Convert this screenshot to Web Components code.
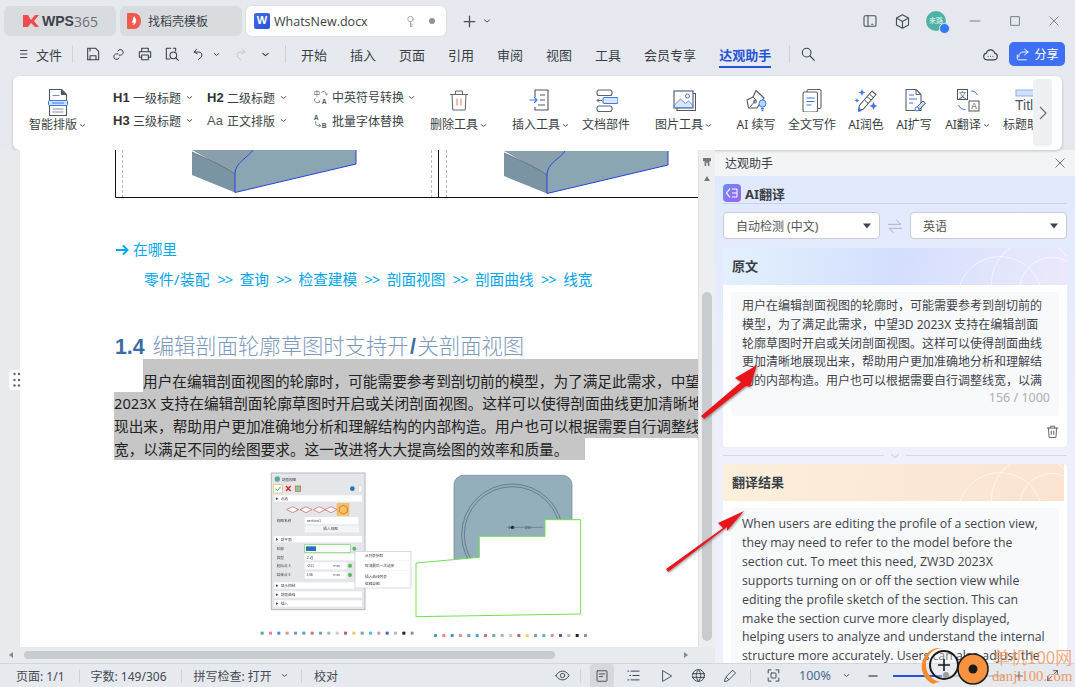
<!DOCTYPE html>
<html lang="zh">
<head>
<meta charset="utf-8">
<title>WhatsNew.docx</title>
<style>
  html, body { margin: 0; padding: 0; background: #e6e9ee; }
  body { font-family: "Noto Sans", "Noto Sans CJK SC", sans-serif; color: #333; }
</style>
</head>
<body>
<wps-app></wps-app>

<script>
const S = 'fill="none" stroke="currentColor" stroke-width="1.6" stroke-linecap="round" stroke-linejoin="round"';
const ICONS = {
  menu: `<path ${S} d="M6 6h11M6 12h11M6 18h11"/>`,
  save: `<path ${S} d="M4 3.500h12l4.500 4.500v12.500h-16.500zM7.500 20.500v-6h9v6M7.500 3.500v4"/>`,
  link: `<path ${S} d="M11 6.500a4.500 4.500 0 0 1 8.500 2c0 2.500-2 4.500-4.500 4.500h-2M13 17.500a4.500 4.500 0 0 1-8.500-2c0-2.500 2-4.500 4.500-4.500h2"/>`,
  print: `<path ${S} d="M7 8V3.500h10V8M7 17H3.500V8.500h17V17H17M7 13.500h10v7H7z"/>`,
  preview: `<path ${S} d="M10 3.500H3.500v16H9M14 3.500h3.500v4"/><circle ${S} cx="14" cy="14" r="5"/><path ${S} d="M18 18l3.500 3.500"/>`,
  undo: `<path ${S} d="M9 3.500L5 8l5 3M5 8h7.500a5 5 0 0 1 3 9l-3.500 3"/>`,
  redo: `<path fill="none" stroke="#c4c7cc" stroke-width="1.600" stroke-linecap="round" stroke-linejoin="round" d="M15 3.500L19 8l-5 3M19 8h-7.500a5 5 0 0 0-3 9l3.500 3"/>`,
  chev: `<path fill="none" stroke="currentColor" stroke-width="2.400" stroke-linecap="round" stroke-linejoin="round" d="M6 9.500l6 5 6-5"/>`,
  search: `<circle ${S} cx="10" cy="10" r="6.500"/><path ${S} d="M15 15l6.500 6.500"/>`,
  plus: `<path fill="none" stroke="currentColor" stroke-width="2" stroke-linecap="round" d="M12 3.500v17M3.500 12h17"/>`,
  phone: `<rect ${S} x="3" y="4" width="18" height="16" rx="2"/><path ${S} d="M9 4v16M14.500 17h2"/>`,
  box: `<path ${S} d="M12 2.500l8.500 4.700v9.600L12 21.500l-8.500-4.700V7.200zM3.500 7.200L12 12l8.500-4.800M12 12v9.500"/>`,
  min: `<path fill="none" stroke="currentColor" stroke-width="1.200" d="M3 12h18"/>`,
  max: `<rect fill="none" stroke="currentColor" stroke-width="1.400" x="3.500" y="3.500" width="17" height="17"/>`,
  close: `<path fill="none" stroke="currentColor" stroke-width="1.300" d="M3 3l18 18M21 3L3 21"/>`,
  cloud: `<path ${S} d="M7 19.500a4.800 4.800 0 0 1-.8-9.500 6 6 0 0 1 11.600 0 4.800 4.800 0 0 1-.8 9.500z"/><path fill="none" stroke="currentColor" stroke-width="1.700" stroke-linecap="round" d="M8.500 14.500h.01M12 14.500h.01M15.500 14.500h.01"/>`,
  share: `<path fill="none" stroke="#fff" stroke-width="1.500" stroke-linecap="round" stroke-linejoin="round" d="M15.500 3.500L21 8l-5.500 4.500M21 8h-8a7 7 0 0 0-7 7v1M3.500 13v5a2.500 2.500 0 0 0 2.500 2.500h12"/>`,
  key: `<circle ${S} cx="12" cy="7.500" r="5"/><path ${S} d="M12 12.500v9M12 17h3.500M12 20.500h3"/>`,
  trash: `<path ${S} d="M3.500 6.500h17M8.500 6.500V3.500h7v3M5.500 6.500l1 15h11l1-15"/><path fill="none" stroke="currentColor" stroke-width="1.600" d="M10 10.500v7M14 10.500v7"/>`,
  'trash-red': `<path fill="none" stroke="#60666e" stroke-width="1" stroke-linejoin="round" d="M3 6.500h18M8.500 6.500V3h7v3.500M5 6.500l.8 15.500h12.400l.8-15.500"/><path fill="none" stroke="#eba79b" stroke-width="1.500" d="M10 10.500v7M14 10.500v7"/>`,
  smart: `<path fill="none" stroke="#4e5661" stroke-width="1.100" stroke-linejoin="round" d="M3.500 1.500h12l5 5v21h-17z"/><path fill="#4e5661" d="M15 1.500l5.500 5.500h-5.500z"/><path stroke="#8a9098" stroke-width="1.200" d="M6.500 7.500h7M6.500 21h11M6.500 24h11"/><rect x="2.500" y="12.500" width="19" height="5" rx="1" fill="#cfe0fb" stroke="#3d78e8" stroke-width="1"/><path stroke="#3d78e8" d="M6 15h12"/>`,
  insert: `<path fill="none" stroke="#4e5661" stroke-width="1.100" stroke-linejoin="round" d="M6 9V2h13v20H6v-3"/><path stroke="#4e5661" d="M11 7h5M11 12h5M9 17h7"/><path fill="none" stroke="#3d78e8" stroke-width="1.100" stroke-linecap="round" stroke-linejoin="round" d="M1 12h7M5.500 9.500L8 12l-2.500 2.500"/>`,
  parts: `<rect x="3" y="2" width="15" height="5.500" rx="2" fill="none" stroke="#5a616b" stroke-width="1.100"/><rect x="3" y="18" width="15" height="5.500" rx="2" fill="none" stroke="#5a616b" stroke-width="1.100"/><rect x="9" y="9.500" width="15" height="6" rx="1.500" fill="#d8e5fc" stroke="#3d78e8" stroke-width="1.100"/><path fill="none" stroke="#5a616b" d="M3 12.500h5M5 10.500l-2 2 2 2"/>`,
  image: `<rect x="2" y="3" width="19" height="17" fill="#fff" stroke="#4e5661" stroke-width="1.100"/><path fill="none" stroke="#4e5661" stroke-width="1.100" d="M21 5.500h2.500v17H5V20"/><path fill="#dce6f6" stroke="#5e8fe8" stroke-width="1" stroke-linejoin="round" d="M2.500 17l6-6 5 4.500 3-2.500 4 4v2.500h-18z"/><circle cx="15.500" cy="8" r="2" fill="#fff" stroke="#3d78e8"/>`,
  aiwrite: `<path fill="none" stroke="#4e5661" stroke-width="1.100" stroke-linejoin="round" d="M12 2.500L20 10l-2 2.500-5 7.500H4.500L3 12l6-3z"/><path fill="none" stroke="#4e5661" d="M9 9l3 3-6 7"/><circle cx="11" cy="13.500" r="1.500" fill="none" stroke="#4e5661"/><circle cx="18.500" cy="15.500" r="3.500" fill="#bcd5fa" stroke="#3d78e8"/><path stroke="#3d78e8" stroke-width="1.300" d="M17 20.500h3M17.500 22.500h2"/>`,
  fulltext: `<rect x="7" y="1.500" width="14" height="19" rx="1.500" fill="#fff" stroke="#5a616b" stroke-width="1.100"/><rect x="3" y="4" width="14.500" height="20" rx="1.500" fill="#fff" stroke="#5a616b" stroke-width="1.100"/><path stroke="#3d78e8" stroke-width="1.200" d="M6.500 10h8M6.500 13.500h8M6.500 17h5"/>`,
  polish: `<path fill="#fff" stroke="#4e5661" stroke-width="1.100" stroke-linejoin="round" d="M18 3l4 3.500L9.500 21l-5 2 .8-5.500z"/><path stroke="#4e5661" d="M15.500 6l3.800 3.500M13 8.500l4 3.500M10.500 12l3.500 3"/><path fill="#3d78e8" d="M8 1l1 2.500L11.500 4.500 9 5.500 8 8 7 5.500 4.500 4.500 7 3.500zM3 10l.7 1.800 1.800.7-1.800.7L3 15l-.7-1.800-1.800-.7 1.800-.7zM19.500 14l1.200 2.800 2.800 1.200-2.800 1.200-1.200 2.800-1.200-2.800-2.800-1.200 2.800-1.200zM5 19l3 4-4 1z"/>`,
  expand: `<path fill="#fff" stroke="#5a616b" stroke-width="1.100" stroke-linejoin="round" d="M4 1.500h10l5 5v16H4z"/><path fill="none" stroke="#5a616b" d="M14 1.500v5h5"/><path stroke="#3d78e8" stroke-width="1.200" d="M7 7h5M7 11h8M7 15h4"/><path fill="#cfe0fb" stroke="#4e5661" d="M21 13l2.500 2-5.500 6-3.500 1 .8-3.500z"/><circle cx="15" cy="21" r="2" fill="#fff" stroke="#3d78e8"/>`,
  translate: `<rect x="1.500" y="1.500" width="10" height="10" fill="#fff" stroke="#4e5661"/><text x="6.500" y="9.500" text-anchor="middle" font-size="8" fill="#4e5661" font-family="Noto Sans CJK SC">文</text><rect x="13" y="13" width="10" height="10" fill="#fff" stroke="#4e5661"/><text x="18" y="21" text-anchor="middle" font-size="8.500" fill="#4e5661" font-family="Liberation Sans">A</text><path fill="none" stroke="#3d78e8" d="M15 3a7 7 0 0 1 6.500 4M9.500 21.500A7 7 0 0 1 2.500 17"/>`,
  title: `<rect x="1" y="2" width="23" height="6" fill="#cfe0fb" stroke="#8db1f0" stroke-width="1"/><text x="0" y="22" font-size="14" fill="#4e5661" font-family="Liberation Sans">Titl</text>`,
  'conv-a': `<text x="1" y="10" font-size="9.500" fill="#4e5661" font-family="Noto Sans CJK SC">中</text><text x="13" y="22" font-size="10" font-weight="700" fill="#4e5661" font-family="Liberation Sans">A</text><path fill="none" stroke="#4e5661" stroke-linecap="round" d="M13 5a4 4 0 0 1 7 3M19 8l1.500 1 1-1.500M3 14a4 4 0 0 0 7 5M9.500 20l1-1.500-1.500-.5"/>`,
  'conv-b': `<text x="1" y="10" font-size="10" font-weight="700" fill="#4e5661" font-family="Liberation Sans">A</text><text x="13" y="22" font-size="10" font-weight="700" fill="#4e5661" font-family="Liberation Sans">B</text><path fill="none" stroke="#4e5661" stroke-linecap="round" d="M4 13v3a3 3 0 0 0 3 3h4M9 16.500l2.500 2.500L9 21"/>`,
  eye: `<path ${S} d="M1.500 12C4.500 7 8 5 12 5s7.500 2 10.500 7c-3 5-6.500 7-10.500 7s-7.500-2-10.500-7z"/><circle ${S} cx="12" cy="12" r="3.500"/>`,
  page: `<rect ${S} x="3.500" y="3" width="17" height="18" rx="1"/><path ${S} d="M7.500 8.500h9M7.500 13h5.500"/>`,
  outline: `<path ${S} d="M3 5h1.500M8 5h13M6 12h1.500M11 12h10M3 19h1.500M8 19h13"/>`,
  play: `<path ${S} d="M5 3l15 9-15 9z"/>`,
  globe: `<circle ${S} cx="12" cy="12" r="9.500"/><path ${S} d="M2.500 9h19M2.500 15h19M12 2.500c-5 6-5 13 0 19M12 2.500c5 6 5 13 0 19"/>`,
  pen: `<path ${S} d="M17 2.500l4.500 4.500L10 18.500 5.500 14zM5.500 14c-2 1-2.500 4-3 7.500 3.500-.5 6.500-1 7.500-3"/>`,
  fit: `<path ${S} d="M8 3H3.500v5M16 3h4.500v5M8 21H3.500v-5M16 21h4.500v-5"/><rect ${S} x="8" y="8" width="8" height="8" rx="1"/>`,
  full: `<path ${S} d="M14 3h7v7M21 3l-7 7M10 21H3v-7M3 21l7-7"/>`,
  swap: `<path fill="none" stroke="#aeb4bb" stroke-width="1.500" stroke-linecap="round" stroke-linejoin="round" d="M2 9.500h19l-6.500-6M22 15.500H3l6.500 6"/>`,
  triangle: `<path fill="currentColor" d="M4 7h16l-8 10z"/>`,
  minus: `<path fill="none" stroke="currentColor" stroke-width="2.600" d="M3 12h18"/>`,
};

class WpsIcon extends HTMLElement {
  connectedCallback() {
    const size = this.getAttribute('size') || 16;
    const name = this.getAttribute('name');
    const vb = name === 'smart' ? '0 0 24 29' : '0 0 24 24';
    const h = name === 'smart' ? Math.round(size * 29 / 24) : size;
    this.attachShadow({ mode: 'open' }).innerHTML = `
      <style>:host { display: inline-flex; line-height: 0; flex: none; } svg { display: block; }</style>
      <svg width="${size}" height="${h}" viewBox="${vb}">${ICONS[name] || ''}</svg>`;
  }
}
customElements.define('wps-icon', WpsIcon);

class WpsTab extends HTMLElement {
  connectedCallback() {
    this.attachShadow({ mode: 'open' }).innerHTML = `
      <style>
        :host { display: flex; align-items: center; height: 30px; border-radius: 6px; background: #d9dcdf;
                box-sizing: border-box; padding-left: 7px; font-size: 12px; color: #3a3f46; overflow: hidden; }
        :host([active]) { background: #fff; font-size: 12.500px; box-shadow: 0 0 2px rgba(0,0,0,.12); }
      </style>
      <slot></slot>`;
  }
}
customElements.define('wps-tab', WpsTab);

class WpsTabbar extends HTMLElement {
  connectedCallback() {
    this.attachShadow({ mode: 'open' }).innerHTML = `
      <style>
        :host { display: flex; align-items: flex-start; height: 38px; box-sizing: border-box; padding: 6px 2px 0 4px; gap: 4px; color: #4a4f56; }
        .logo { width: 16px; height: 12px; margin: 0 3px 0 12px; }
        .wps { font: 700 14px "Liberation Sans", sans-serif; color: #3d434b; }
        .n365 { font: 400 14px "Open Sans", sans-serif; color: #6a6f76; }
        .w { width: 16px; height: 16px; border-radius: 2px; background: linear-gradient(135deg, #3d6bf0, #2c54d8); color: #fff;
             font: 700 11px/15px "Liberation Sans", sans-serif; text-align: center; margin: 0 4px 0 1px; }
        .w-t { width: 130px; font-family: "Open Sans", sans-serif; white-space: nowrap; }
        .dot { width: 6px; height: 6px; border-radius: 50%; background: #8e9298; margin-left: 12px; }
        .add { display: flex; align-items: center; gap: 5px; height: 30px; margin-left: 12px; }
        .right { margin-left: auto; display: flex; align-items: center; height: 30px; }
        .slot { display: flex; justify-content: center; align-items: center; width: 32px; height: 30px; }
        .avatar { position: relative; width: 20px; height: 20px; border-radius: 50%; background: #4db3a4; color: #e8f6f3;
                  font-size: 7px; line-height: 20px; text-align: center; }
        .avatar i { position: absolute; right: -4px; bottom: -3px; width: 9px; height: 9px; border-radius: 50%; background: #2f7bf0; border: 1px solid #e6e9ee; }
        .win { width: 40px; display: flex; justify-content: center; }
      </style>
      <wps-tab style="width:112px">
        <svg class="logo" viewBox="0 0 16 12"><path fill="#ee4a4f" d="M0 0h5l3 5 4-5h4l-5 6 5 6h-4L8 8l-3 4H0z"/></svg>
        <span class="wps">WPS</span><span class="n365">365</span>
      </wps-tab>
      <wps-tab style="width:122px">
        <svg width="14" height="16" viewBox="0 0 14 16" style="margin:0 7px 0 0"><path fill="#ee5a4d" d="M0 1a1 1 0 0 1 1-1h6a7 8 0 0 1 0 16H1a1 1 0 0 1-1-1z"/><path fill="#fff" d="M7 3c1 2 3 3 2 6-.5 2-2 3-4 3 2-1 2-2 1-3-.5 1-1 1-1.500 1C6 8 6 5 7 3z"/></svg>
        <span>找稻壳模板</span>
      </wps-tab>
      <wps-tab active style="width:200px">
        <span class="w">W</span><span class="w-t">WhatsNew.docx</span>
        <wps-icon name="key" size="13" style="color:#9aa0a6"></wps-icon><span class="dot"></span>
      </wps-tab>
      <div class="add"><wps-icon name="plus" size="15"></wps-icon><wps-icon name="chev" size="10"></wps-icon></div>
      <div class="right">
        <div class="slot"><wps-icon name="phone" size="16"></wps-icon></div>
        <div class="slot"><wps-icon name="box" size="17"></wps-icon></div>
        <div class="slot" style="margin-left:2px"><div class="avatar">来路<i></i></div></div>
        <div class="win" style="margin-left:3px"><wps-icon name="min" size="14"></wps-icon></div>
        <div class="win"><wps-icon name="max" size="12"></wps-icon></div>
        <div class="win" style="width:38px"><wps-icon name="close" size="12"></wps-icon></div>
      </div>`;
  }
}
customElements.define('wps-tabbar', WpsTabbar);

class WpsMenubar extends HTMLElement {
  connectedCallback() {
    const slot = (w, html) => `<span class="s" style="width:${w}px">${html}</span>`;
    const ic = (n, size = 16) => `<wps-icon name="${n}" size="${size}"></wps-icon>`;
    const tabs = ['开始', '插入', '页面', '引用', '审阅', '视图', '工具', '会员专享'];
    this.attachShadow({ mode: 'open' }).innerHTML = `
      <style>
        :host { display: flex; align-items: center; height: 38px; box-sizing: border-box; padding: 0 10px 6px 14px; font-size: 13px; color: #3a3f46; }
        .s { display: flex; justify-content: center; align-items: center; flex: none; }
        .d { width: 1px; height: 18px; background: #cfd2d6; }
        .tabs { display: flex; gap: 23px; margin-left: 2px; }
        .on { position: relative; color: #2553d8; font-weight: 700; }
        .on::after { content: ""; position: absolute; left: 0; right: 0; bottom: -4px; height: 2px; background: #2553d8; }
        .share { margin-left: 10px; width: 56px; height: 24px; border-radius: 5px; background: #3f6ff5; color: #fff; font-size: 12px;
                 display: flex; align-items: center; justify-content: center; gap: 4px; }
        .cloud { margin-left: auto; }
      </style>
      ${slot(20, ic('menu', 14))}${slot(30, '<span>文件</span>')}${slot(16, '<i class="d"></i>')}
      ${slot(25, ic('save'))}${slot(27, ic('link', 15))}${slot(26, ic('print'))}${slot(27, ic('preview'))}${slot(26, ic('undo', 15))}
      ${slot(10, ic('chev', 9))}${slot(38, ic('redo', 15))}${slot(12, ic('chev', 11))}${slot(28, '<i class="d"></i>')}
      <div class="tabs">${tabs.map(t => `<span>${t}</span>`).join('')}<span class="on">达观助手</span></div>
      ${slot(37, '<i class="d"></i>')}${slot(0, ic('search', 16))}
      <span class="s cloud">${ic('cloud', 17)}</span>
      <div class="share">${ic('share', 15)}<span>分享</span></div>`;
  }
}
customElements.define('wps-menubar', WpsMenubar);

class RibbonTool extends HTMLElement {
  connectedCallback() {
    const arrow = this.hasAttribute('arrow') ? '<wps-icon name="chev" size="9"></wps-icon>' : '';
    this.attachShadow({ mode: 'open' }).innerHTML = `
      <style>
        :host { display: flex; flex-direction: column; align-items: center; flex: none; font-size: 12px; color: #3a3f46; white-space: nowrap; }
        .i { height: 28px; margin-top: 12px; display: flex; align-items: flex-start; justify-content: center; }
        .l { display: flex; align-items: center; gap: 1px; line-height: 16px; margin-top: 1px; }
      </style>
      <div class="i"><wps-icon name="${this.getAttribute('icon')}" size="${this.getAttribute('size') || 24}"></wps-icon></div>
      <div class="l"><slot></slot>${arrow}</div>`;
  }
}
customElements.define('ribbon-tool', RibbonTool);

class WpsRibbon extends HTMLElement {
  connectedCallback() {
    const head = (k, t, w = 18) => `<span class="h"><b style="width:${w}px">${k}</b><span>${t}</span><wps-icon name="chev" size="9"></wps-icon></span>`;
    this.attachShadow({ mode: 'open' }).innerHTML = `
      <style>
        :host { display: flex; position: relative; height: 74px; width: 1049px; margin-left: 13px; box-sizing: border-box; padding-left: 10px;
                background: #fff; border-radius: 6px; box-shadow: 0 1px 3px rgba(0,0,0,.2); overflow: hidden; flex: none; font-size: 12px; color: #3a3f46; }
        ribbon-tool { margin-left: var(--ml, 12px); width: var(--w, 36px); }
        .grid { display: grid; grid-template-columns: 94px 94px; grid-auto-rows: 23px; margin: 10px 0 0 20px; width: 188px; flex: none; }
        .h { display: flex; align-items: center; gap: 2px; white-space: nowrap; }
        .h b { font: 700 13px "Liberation Sans", sans-serif; color: #333; }
        .h span { margin-right: 2px; }
        .h.aa b { font-weight: 400; color: #555; }
        .conv { display: grid; grid-auto-rows: 24px; margin: 9px 0 0 12px; width: 110px; flex: none; }
        .c { display: flex; align-items: center; gap: 3px; white-space: nowrap; }
        .more { position: absolute; right: 10px; top: 3px; bottom: 4px; width: 19px; background: #eef0f2; border-radius: 4px;
                display: flex; align-items: center; justify-content: center; }
      </style>
      <ribbon-tool icon="smart" arrow style="--ml:0;--w:70px">智能排版</ribbon-tool>
      <div class="grid">
        ${head('H1', '一级标题')}${head('H2', '二级标题')}${head('H3', '三级标题')}
        <span class="h aa"><b style="width:18px">Aa</b><span>正文排版</span><wps-icon name="chev" size="9"></wps-icon></span>
      </div>
      <div class="conv">
        <span class="c"><wps-icon name="conv-a" size="16"></wps-icon><span>中英符号转换</span><wps-icon name="chev" size="9"></wps-icon></span>
        <span class="c"><wps-icon name="conv-b" size="16"></wps-icon><span>批量字体替换</span></span>
      </div>
      <ribbon-tool icon="trash-red" arrow style="--ml:6px;--w:60px">删除工具</ribbon-tool>
      <ribbon-tool icon="insert" arrow style="--ml:22px;--w:60px">插入工具</ribbon-tool>
      <ribbon-tool icon="parts" style="--ml:10px;--w:50px">文档部件</ribbon-tool>
      <ribbon-tool icon="image" arrow style="--ml:23px;--w:60px">图片工具</ribbon-tool>
      <ribbon-tool icon="aiwrite" style="--ml:22px;--w:40px">AI 续写</ribbon-tool>
      <ribbon-tool icon="fulltext" style="--w:48px">全文写作</ribbon-tool>
      <ribbon-tool icon="polish">AI润色</ribbon-tool>
      <ribbon-tool icon="expand">AI扩写</ribbon-tool>
      <ribbon-tool icon="translate" arrow style="--w:48px">AI翻译</ribbon-tool>
      <ribbon-tool icon="title" style="--ml:11px;--w:48px">标题助手</ribbon-tool>
      <div class="more"><svg width="8" height="14" viewBox="0 0 8 14"><path d="M1 1l6 6-6 6" fill="none" stroke="#6a6f76" stroke-width="1.200"/></svg></div>`;
  }
}
customElements.define('wps-ribbon', WpsRibbon);

class CadBlocks extends HTMLElement {
  connectedCallback() {
    const block = (dx, dy) => `<g transform="translate(${dx} ${dy})">
      <path fill="#8aa6b2" d="M120 0H286V14L165 42.500V24C165 12 178 8 183 0z"/>
      <path fill="#8a9fac" d="M122 0h61c-5 8-18 12-18 24z"/>
      <path fill="#7a94a3" d="M122 25L165 42.500V24C150 14 135 8 122 2z"/>
      <path fill="none" stroke="#4d626e" stroke-width=".7" d="M122 2C135 8 150 14 165 24"/>
      <path fill="none" stroke="#2a3fe0" stroke-width="1" d="M183 0c-5 8-18 12-18 24V42.500L286 14V0"/>
      </g>`;
    this.attachShadow({ mode: 'open' }).innerHTML = `
      <style>:host { display: block; height: 48px; overflow: hidden; margin-left: 95px; } svg { display: block; }</style>
      <svg width="583" height="48" viewBox="70 0 583 48">
        <path stroke="#bbb" stroke-dasharray="3 2" d="M77.500 0v47M386.500 0v47M401.500 0v47"/>
        ${block(25, 0)}${block(337, 1)}
        <path stroke="#111" stroke-width="1" fill="none" d="M70.500 0v47.500H660M393.500 0v47.500"/>
      </svg>`;
  }
}
customElements.define('cad-blocks', CadBlocks);

class CadFigure extends HTMLElement {
  connectedCallback() {
    const colors = ['#5a8', '#e88', '#4a90d9', '#d98', '#79b', '#4aa3d9', '#c77', '#7a9', '#9bc', '#ccc', '#b66', '#f2d060', '#7a9', '#5bc', '#c9a', '#46a', '#bbb', '#222', '#79b'];
    const strip = (x, y) => colors.map((c, i) => `<rect x="${x + i * 25}" y="${y}" width="9" height="9" fill="${c}"/>`).join('');
    const label = (x, y, t) => `<text x="${x}" y="${y}" font-size="11" fill="#444" font-family="Noto Sans CJK SC">${t}</text>`;
    const row = (y, t) => `<rect x="73" y="${y}" width="263" height="19" fill="#fff"/>${label(92, y + 14, t)}<path fill="#444" d="M78 ${y + 6}l7 4-7 4z"/>`;
    this.attachShadow({ mode: 'open' }).innerHTML = `
      <style>:host { display: block; width: 350px; height: 185px; margin-left: 230px; } svg { display: block; filter: blur(.45px); }</style>
      <svg width="350" height="185" viewBox="0 0 1050 555">
        <rect x="64" y="27" width="281" height="410" fill="#e4e6ea" stroke="#b5b8bc" stroke-width="3"/>
        <circle cx="82" cy="45" r="8" fill="#5aa"/>${label(95, 50, '剖面视图')}
        <rect x="70" y="62" width="27" height="25" fill="#fff" stroke="#e8c050" stroke-width="2"/><path d="M76 74l6 6 10-12" fill="none" stroke="#3a9" stroke-width="3"/>
        <path d="M108 66l14 15M122 66l-14 15" stroke="#d22" stroke-width="4"/><rect x="136" y="66" width="16" height="16" fill="#8c8" stroke="#d55" stroke-width="2"/>
        <circle cx="307" cy="74" r="7" fill="#27a"/><rect x="326" y="64" width="10" height="20" fill="#fff" stroke="#db8"/>
        ${row(94, '必选')}
        ${[110, 150, 190, 225].map(x => `<path d="M${x} 137l18-9 18 9-18 9z" fill="#fff" stroke="#c55" stroke-width="2"/>`).join('')}
        <rect x="261" y="118" width="36" height="36" fill="#f6c35c" stroke="#e8a040"/><path d="M268 130l12-6 12 6v14l-12 6-12-6z" fill="none" stroke="#c55" stroke-width="2"/>
        ${label(80, 174, '视图名称')}<rect x="164" y="159" width="161" height="22" fill="#fff"/>${label(170, 174, 'section1')}
        <rect x="164" y="185" width="163" height="20" fill="#f4f5f6"/>${label(220, 199, '插入视图')}
        ${row(216, '剖平面')}
        ${label(80, 259, '轮廓')}<rect x="164" y="242" width="137" height="24" fill="#fff" stroke="#70d860" stroke-width="2"/><rect x="168" y="247" width="30" height="14" fill="#2a6cc0"/>
        <circle cx="313" cy="254" r="6" fill="#5b5"/>
        ${label(80, 284, '类型')}<rect x="164" y="270" width="150" height="19" fill="#fff"/>${label(170, 284, '2 边')}
        ${label(80, 309, '起始点 S')}<rect x="164" y="295" width="126" height="21" fill="#fff"/>${label(170, 309, '-231')}${label(250, 309, 'mm')}
        ${label(80, 337, '结束点 E')}<rect x="164" y="323" width="126" height="21" fill="#fff"/>${label(170, 337, '146')}${label(250, 337, 'mm')}
        <circle cx="300" cy="305" r="6" fill="#5b5"/><circle cx="300" cy="333" r="6" fill="#5b5"/>
        ${row(355, '显示控制')}${row(382, '剖面曲线')}${row(409, '插入')}
        <rect x="315" y="262" width="168" height="110" fill="#fff" stroke="#c8cace" stroke-width="2"/>
        ${label(345, 278, '从列表拾取')}${label(345, 309, '取消最后一次选择')}${label(345, 341, '插入曲线列表')}${label(345, 363, '编辑草图')}
        <path stroke="#ddd" d="M340 290h138M340 320h138"/>
        <rect x="612" y="34" width="354" height="340" rx="28" fill="#94afbc" stroke="#6f828c" stroke-width="2"/>
        <circle cx="787" cy="212" r="152" fill="none" stroke="#3c4a52" stroke-width="1.500"/><circle cx="787" cy="212" r="144" fill="none" stroke="#3c4a52" stroke-width="1.500"/>
        <path d="M770 190h110" stroke="#333" stroke-width="1"/><circle cx="787" cy="190" r="5" fill="#124"/>
        ${label(775, 196, '146')}${label(825, 196, '231')}
        <path d="M885 167H992V450L498 458V297L688 280V217H885z" fill="#fff" stroke="#74e04e" stroke-width="3"/>
        ${strip(32, 503)}${strip(552, 510)}
      </svg>`;
  }
}
customElements.define('cad-figure', CadFigure);

class DocPage extends HTMLElement {
  connectedCallback() {
    const crumbs = ['零件/装配', '查询', '检查建模', '剖面视图', '剖面曲线', '线宽'];
    this.attachShadow({ mode: 'open' }).innerHTML = `
      <style>
        :host { display: block; background: #fff; overflow: hidden; font-size: 14.67px; color: #222; font-family: "Noto Sans", "Noto Sans CJK SC", sans-serif; }
        .where { margin: 40px 0 0 95px; color: #00a9ec; line-height: 23px; display: flex; align-items: center; gap: 4px; }
        .crumb { margin: 7px 0 0 124px; color: #00a4e8; line-height: 23px; display: flex; white-space: nowrap; }
        .crumb i { font-style: normal; margin: 0 7.400px; letter-spacing: -1px; }
        .crumb span:first-child { letter-spacing: .4px; }
        h2 { margin: 39.500px 0 -2px 95px; font-size: 21.33px; font-weight: 300; line-height: 30px; color: #7c9abd; white-space: nowrap; }
        h2 b { color: #3a6ca5; font: 700 21.33px "Liberation Sans", sans-serif; margin-right: 8px; }
        h2 em { font: 700 21.33px "Liberation Sans", sans-serif; color: #3a6ca5; margin: 0 1.500px; }
        .p div { background: #c6c6c6; white-space: nowrap; overflow: hidden; height: 22.670px; line-height: 22.670px; margin-left: 94px; }
        .p div.first { margin-left: 123px; padding-top: 11.340px; }
        .p div.last { width: 471px; }
        .fig { margin-top: 4px; }
      </style>
      <cad-blocks></cad-blocks>
      <div class="where"><svg width="14" height="12" viewBox="0 0 14 12"><path d="M1 6h11M8 1.500L12.500 6 8 10.500" fill="none" stroke="#00a9ec" stroke-width="2"/></svg><span>在哪里</span></div>
      <div class="crumb">${crumbs.map(c => `<span>${c}</span>`).join('<i>&gt;&gt;</i>')}</div>
      <h2><b>1.4</b>编辑剖面轮廓草图时支持开<em>/</em>关剖面视图</h2>
      <div class="p">
        <div class="first">用户在编辑剖面视图的轮廓时，可能需要参考到剖切前的模型，为了满足此需求，中望</div>
        <div>2023X 支持在编辑剖面轮廓草图时开启或关闭剖面视图。这样可以使得剖面曲线更加清晰地</div>
        <div>现出来，帮助用户更加准确地分析和理解结构的内部构造。用户也可以根据需要自行调整线</div>
        <div class="last">宽，以满足不同的绘图要求。这一改进将大大提高绘图的效率和质量。</div>
      </div>
      <cad-figure class="fig"></cad-figure>`;
  }
}
customElements.define('doc-page', DocPage);

class DocView extends HTMLElement {
  connectedCallback() {
    this.attachShadow({ mode: 'open' }).innerHTML = `
      <style>
        :host { display: grid; grid-template-columns: 20px 678px 17px; grid-template-rows: 497px 16px; position: relative; width: 715px; flex: none; background: #e8ebee; }
        .handle { position: absolute; left: 9px; top: 220px; width: 15px; height: 20px; background: #fff; border-radius: 3px; display: flex; }
        .v { position: relative; background: #eceef0; border-left: 1px solid #e0e2e5; }
        .v .t { position: absolute; left: 3px; right: 3px; top: 142px; bottom: 6px; border-radius: 5px; background: #c9cccf; }
        .v .a { position: absolute; left: 5px; width: 0; height: 0; border: 3px solid transparent; border-bottom: 5px solid #777; border-top: 0; top: 26px; }
        .v .m { position: absolute; left: 4px; top: 8px; width: 8px; height: 8px; background: #777; clip-path: polygon(0 0,100% 0,100% 40%,80% 40%,80% 100%,60% 100%,60% 60%,40% 60%,40% 100%,20% 100%,20% 40%,0 40%); }
        .h { grid-column: 1 / 4; position: relative; }
        .h .t { position: absolute; left: 24px; width: 531px; top: 4px; height: 8px; border-radius: 4px; background: #c9cccf; }
        .h .l, .h .r { position: absolute; top: 5px; width: 0; height: 0; border: 3px solid transparent; }
        .h .l { left: 9px; border-right: 4px solid #888; border-left: 0; }
        .h .r { left: 684px; border-left: 4px solid #888; border-right: 0; }
      </style>
      <div></div>
      <doc-page></doc-page>
      <div class="v"><i class="m"></i><i class="a"></i><div class="t"></div></div>
      <div class="h"><i class="l"></i><div class="t"></div><i class="r"></i></div>
      <div class="handle"><svg width="15" height="20" viewBox="0 0 15 20" fill="#666"><circle cx="5.500" cy="4" r="1.200"/><circle cx="10" cy="4" r="1.200"/><circle cx="5.500" cy="10" r="1.200"/><circle cx="10" cy="10" r="1.200"/><circle cx="5.500" cy="15.500" r="1.200"/><circle cx="10" cy="15.500" r="1.200"/></svg></div>`;
  }
}
customElements.define('doc-view', DocView);

class LangSelect extends HTMLElement {
  connectedCallback() {
    this.attachShadow({ mode: 'open' }).innerHTML = `
      <style>
        :host { display: flex; align-items: center; justify-content: space-between; width: 157px; height: 27px; box-sizing: border-box; padding: 0 6px 0 12px;
                background: #fff; border: 1px solid #c9ccd2; border-radius: 4px; font-size: 12px; color: #555; }
      </style>
      <slot></slot><wps-icon name="triangle" size="12" style="color:#3c4650"></wps-icon>`;
  }
}
customElements.define('lang-select', LangSelect);

class AiCard extends HTMLElement {
  connectedCallback() {
    this.attachShadow({ mode: 'open' }).innerHTML = `
      <style>
        :host { display: block; background: #fff; border-radius: 4px; width: 344px; overflow: hidden; flex: none; }
        .head { position: relative; overflow: hidden; height: 37px; line-height: 37px; padding-left: 9px; font-size: 13px; font-weight: 700; color: #3a3f46;
                background: var(--head); margin-right: var(--head-r, 0); }
        .head i { position: absolute; border-radius: 50%; border: 1px solid rgba(255,255,255,.6); }
        .body { margin: 7px 8px 0; background: #f8f9fb; border-radius: 4px; position: relative; box-sizing: border-box; height: var(--body-h); padding: 5px 11px 0; overflow: hidden;
                font-size: 12px; line-height: 18.750px; color: #3f444b; }
        ::slotted(*) { display: block; }
      </style>
      <div class="head">${this.getAttribute('title')}
        <i style="width:84px;height:84px;left:234px;top:8px"></i><i style="width:84px;height:84px;left:268px;top:-8px"></i><i style="width:64px;height:64px;left:296px;top:9px"></i>
      </div>
      <div class="body"><slot></slot></div>
      <slot name="foot"></slot>`;
  }
}
customElements.define('ai-card', AiCard);

class AiPanel extends HTMLElement {
  connectedCallback() {
    this.attachShadow({ mode: 'open' }).innerHTML = `
      <style>
        :host { display: flex; flex-direction: column; width: 360px; height: 513px; overflow: hidden; flex: none; background: linear-gradient(180deg, #dfe8fd, #eef0fb 60%); font-size: 12px; }
        .title { display: flex; justify-content: space-between; align-items: center; height: 26px; padding: 0 9px 0 10px; background: #f3f4f5; color: #3a3f46; font-size: 12px; flex: none; }
        .ai { display: flex; align-items: center; gap: 4px; height: 18px; margin: 8px 8px 0; border-bottom: 1px solid #c8d2ee; font-weight: 700; font-size: 13px; color: #3a3f46; padding-bottom: 1px; flex: none; }
        .logo { width: 18px; height: 18px; border-radius: 4px; background: linear-gradient(135deg, #6f8cf5, #9a63f0); }
        .sel { display: flex; align-items: center; justify-content: space-between; margin: 8px 8px 9px; flex: none; }
        .cards { display: flex; flex-direction: column; margin-left: 8px; }
        .txt { height: 92px; overflow: hidden; }
        .count { text-align: right; color: #adb0b5; font-size: 12.500px; line-height: 16px; margin: 1px -2px 0 0; }
        .foot { display: flex; justify-content: flex-end; padding: 8px 7px 8px; color: #666; }
        .sep { display: flex; align-items: center; gap: 4px; height: 17px; margin: 0 8px 0 0; flex: none; }
        .sep i { flex: 1; height: 1px; background: #d6d9e0; }
        .en { font-family: "Open Sans", sans-serif; font-size: 12.300px; line-height: 18.900px; white-space: nowrap; padding-top: 2px; }
      </style>
      <div class="title"><span>达观助手</span><wps-icon name="close" size="12" style="color:#333"></wps-icon></div>
      <div class="ai">
        <svg class="logo" viewBox="0 0 18 18"><path d="M7 4.500L3.500 9 7 13.500" fill="none" stroke="#fff" stroke-width="1.200"/><path d="M9 5h5v8H9M9 9h5" fill="none" stroke="#fff"/></svg>
        <span>AI翻译</span>
      </div>
      <div class="sel">
        <lang-select>自动检测 (中文)</lang-select>
        <wps-icon name="swap" size="16"></wps-icon>
        <lang-select>英语</lang-select>
      </div>
      <div class="cards">
        <ai-card title="原文" style="--head:linear-gradient(100deg,#e3f1fd,#d4dffe 50%,#ebe9fb);--body-h:124px">
          <div class="txt">用户在编辑剖面视图的轮廓时，可能需要参考到剖切前的模型，为了满足此需求，中望3D 2023X 支持在编辑剖面轮廓草图时开启或关闭剖面视图。这样可以使得剖面曲线更加清晰地展现出来，帮助用户更加准确地分析和理解结构的内部构造。用户也可以根据需要自行调整线宽，以满足不同的绘图要求。这一改进将大大提高绘图的效率和质量。</div>
          <div class="count">156 / 1000</div>
          <div slot="foot" class="foot"><wps-icon name="trash" size="15"></wps-icon></div>
        </ai-card>
        <div class="sep"><i></i><wps-icon name="chev" size="14" style="color:#d6d9e0"></wps-icon><i></i></div>
        <ai-card title="翻译结果" style="--head:linear-gradient(100deg,#fbf0dc,#fbe3d0);--head-r:3px;--body-h:170px">
          <div class="en">When users are editing the profile of a section view,<br>they may need to refer to the model before the<br>section cut. To meet this need, ZW3D 2023X<br>supports turning on or off the section view while<br>editing the profile sketch of the section. This can<br>make the section curve more clearly displayed,<br>helping users to analyze and understand the internal<br>structure more accurately. Users can also adjust the</div>
        </ai-card>
      </div>`;
  }
}
customElements.define('ai-panel', AiPanel);

class WpsStatus extends HTMLElement {
  connectedCallback() {
    const s = (w, html) => `<span class="s" style="width:${w}px">${html}</span>`;
    const ic = (n, size = 15) => `<wps-icon name="${n}" size="${size}"></wps-icon>`;
    this.attachShadow({ mode: 'open' }).innerHTML = `
      <style>
        :host { display: flex; align-items: center; height: 24px; box-sizing: border-box; border-top: 1px solid #d4d6d9; padding: 0 2px 0 16px; background: #e6e9ed; font-size: 12px; color: #444a52; flex: none; white-space: nowrap; }
        .d { width: 1px; height: 14px; background: #cfd2d6; flex: none; }
        .g { margin: 0 11px 0 14px; }
        .s { display: flex; justify-content: center; align-items: center; height: 24px; flex: none; }
        .on { background: #d6d8db; border-radius: 3px; }
        .right { margin-left: auto; display: flex; align-items: center; }
        .slider { position: relative; width: 112px; height: 2px; background: #c6c9cd; margin: 0 2px 0 8px; }
        .slider::before { content: ""; position: absolute; left: 0; top: 0; height: 2px; width: 49px; background: #2553d8; }
        .pct { color: #4a6a90; font-size: 12.500px; width: 32px; margin-left: 16px; }
      </style>
      <span>页面: 1/1</span><i class="d g"></i><span>字数: 149/306</span><i class="d" style="margin:0 12px 0 14px"></i><span>拼写检查: 打开</span>
      <wps-icon name="chev" size="9" style="margin:0 12px 0 8px"></wps-icon><i class="d" style="margin-right:12px"></i><span>校对</span>
      <div class="right">
        ${s(32, ic('eye'))}<i class="d" style="margin:0 9px 0 2px"></i>
        <span class="s on" style="width:24px">${ic('page', 14)}</span>
        ${s(38, ic('outline'))}${s(30, ic('play', 14))}${s(32, ic('globe'))}${s(32, ic('pen', 14))}
        <i class="d" style="margin:0 12px 0 4px"></i>${s(20, ic('fit'))}<span class="pct">100%</span>
        ${s(30, ic('chev', 9))}${s(24, ic('minus', 12))}
        <div class="slider"></div>${s(24, ic('plus', 10))}${s(42, ic('full', 13))}
      </div>`;
  }
}
customElements.define('wps-status', WpsStatus);

class WatermarkOverlay extends HTMLElement {
  connectedCallback() {
    this.attachShadow({ mode: 'open' }).innerHTML = `
      <style>
        :host { position: absolute; inset: 0; pointer-events: none; display: block; overflow: hidden; }
        svg { position: absolute; left: 0; top: 0; }
        .cn { position: absolute; left: 993px; top: 644px; font-size: 17px; line-height: 26px; white-space: nowrap; color: rgba(240,150,95,.8); font-family: "Noto Sans CJK SC", sans-serif; }
        .en { position: absolute; left: 992px; top: 667px; font: 14.700px/18px "Liberation Serif", serif; white-space: nowrap; color: rgba(240,140,80,.9); }
      </style>
      <svg width="1075" height="687" viewBox="0 0 1075 687">
        <defs><filter id="sh" x="-20%" y="-20%" width="140%" height="140%"><feDropShadow dx="1" dy="1" stdDeviation="1" flood-color="#555" flood-opacity=".6"/></filter></defs>
        <g filter="url(#sh)" fill="#e8141c">
          <path d="M757 365L735 378 741 382 701 416 704 419 746 386 750 387z"/>
          <path d="M744 511L718 523 723 528 666 569 668 572 727 527 727 531z"/>
        </g>
        <path d="M937 648a19 19 0 0 0 -4 36a20 20 0 0 1 8 -2a16 16 0 0 1 4-34z" fill="#f58a2f"/>
        <circle cx="944" cy="665" r="14" fill="#f3f4f7" fill-opacity=".35" stroke="#1a1a1a" stroke-width="2"/>
        <path d="M944 659v12M938 665h12" stroke="#1a1a1a" stroke-width="1.600"/>
        <circle cx="946" cy="675" r="3" fill="#9a9a9a"/>
        <circle cx="973" cy="669" r="15" fill="#f79340" stroke="#1a1a1a" stroke-width="1.500"/>
        <circle cx="973" cy="669" r="4.500" fill="#1a1a1a"/>
      </svg>
      <span class="cn">单机100网</span>
      <span class="en">danji100.com</span>`;
  }
}
customElements.define('watermark-overlay', WatermarkOverlay);

class WpsApp extends HTMLElement {
  connectedCallback() {
    this.attachShadow({ mode: 'open' }).innerHTML = `
      <style>
        :host { display: flex; flex-direction: column; position: relative; width: 1075px; height: 687px; overflow: hidden; background: linear-gradient(90deg, #e6e9ed, #e6e8f0); }
        .main { display: flex; height: 513px; flex: none; }
      </style>
      <wps-tabbar></wps-tabbar>
      <wps-menubar></wps-menubar>
      <wps-ribbon></wps-ribbon>
      <div class="main"><doc-view></doc-view><ai-panel></ai-panel></div>
      <wps-status></wps-status>
      <watermark-overlay></watermark-overlay>`;
  }
}
customElements.define('wps-app', WpsApp);
</script>
</body>
</html>
